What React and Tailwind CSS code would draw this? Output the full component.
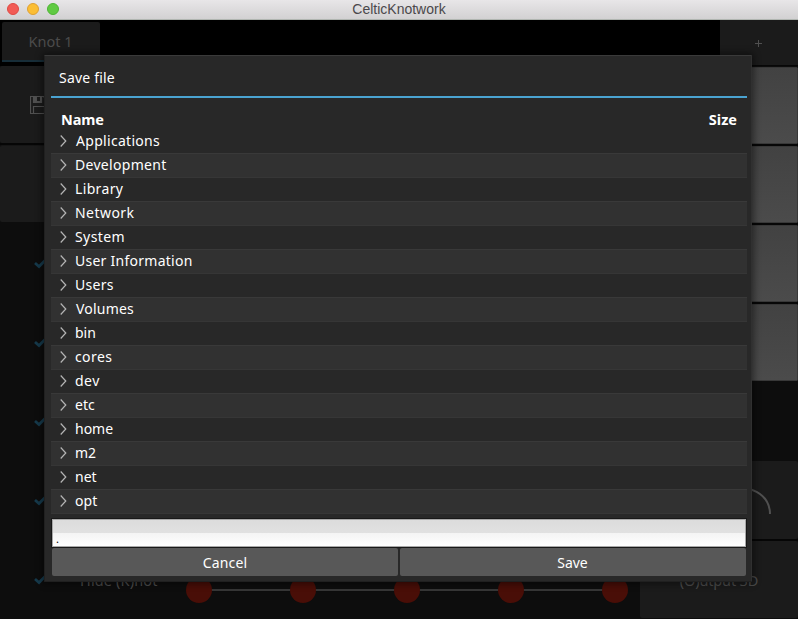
import React from "react";

const folders = [
  ["Applications", "tracking-[0.3px] ml-[1px]"], ["Development", "tracking-[0.3px]"], ["Library", "tracking-[0.35px]"],
  ["Network", "tracking-[0.45px]"], ["System", "tracking-[0.4px]"], ["User Information", "tracking-[0.26px]"],
  ["Users", "tracking-[0.3px]"], ["Volumes", "tracking-[0.2px] ml-[1px]"], ["bin", "tracking-normal"],
  ["cores", "tracking-[0.4px]"], ["dev", "tracking-[0.5px]"], ["etc", "tracking-normal"],
  ["home", "tracking-normal"], ["m2", "tracking-normal"], ["net", "tracking-normal"], ["opt", "tracking-[0.1px]"],
];

function Check() {
  return (
    <svg className="mt-[3px] ml-[34px] h-3 w-4" viewBox="0 0 16 12" fill="none" stroke="#163a4c" strokeWidth="2.8">
      <path d="M1 4 L5 7.5 L11 1.5" />
    </svg>
  );
}

function Tile() {
  return <div className="h-[77px] w-full shrink-0 rounded-[1px] border border-[#383838] bg-linear-to-b from-[#424242] to-[#4b4b4b]" />;
}

function TitleBar() {
  return (
    <div className="relative flex h-5 shrink-0 items-center border-b border-[#b0b5b0] bg-linear-to-b from-[#e8e6e8] to-[#d2d1d2] pl-[7px]">
      <div className="flex gap-2">
        <span className="-mt-[1px] size-3 rounded-full border border-[#df4a43] bg-[#f25b55]" />
        <span className="-mt-[1px] size-3 rounded-full border border-[#dfa032] bg-[#fbbe34]" />
        <span className="-mt-[1px] size-3 rounded-full border border-[#4eb534] bg-[#60ca42]" />
      </div>
      <span className="absolute inset-x-0 top-0 text-center font-['Liberation_Sans',sans-serif] text-[14px] leading-[19px] text-[#4b484b]">CelticKnotwork</span>
    </div>
  );
}

function Backdrop() {
  return (
    <div className="flex flex-1 flex-col">
      <div className="flex h-[46px] justify-between">
        <div className="mt-[2px] ml-[2px] flex h-10 w-[98px] items-center justify-center rounded-t-[2px] border-b-2 border-[#172d38] bg-[#1b1b1b] pt-[2px] pr-[1px] text-[14.5px] text-[#4b4b4b]">Knot 1</div>
        <div className="flex w-[78px] items-center justify-center border-b border-[#070707] bg-[#1b1b1b] pr-[1px] text-[#505050]">
          <svg className="mt-[2px] size-[7px]" viewBox="0 0 7 7" stroke="currentColor"><path d="M3.5 0V7M0 3.5H7" /></svg>
        </div>
      </div>
      <div className="flex h-[553px] bg-[#0d0d0d]">
        <div className="flex w-[80px] flex-col">
          <div className="flex h-[77px] items-center rounded-[2px] bg-[#1b1b1b]">
            <svg className="mt-[1px] ml-[30px] h-[18px] w-[18px]" viewBox="0 0 18 18" fill="none" stroke="#505050" strokeWidth="1.2">
              <path d="M.5 .5H13.5L17.5 4.5V17.5H.5ZM3.5 .5V6.5H11.5V.5M3.5 17.5V10.5H14.5V17.5" />
              <path d="M4 1H7V5H10V1H11V6H4Z" fill="#505050" stroke="none" />
            </svg>
          </div>
          <div className="h-[2px] bg-[#060606]" />
          <div className="h-[77px] rounded-[2px] border-t border-[#151515] bg-[#1b1b1b]" />
          <div className="mt-[2px] flex h-[395px] flex-col">
            <div className="flex flex-1 items-center"><Check /></div>
            <div className="flex flex-1 items-center"><Check /></div>
            <div className="flex flex-1 items-center"><Check /></div>
            <div className="flex flex-1 items-center"><Check /></div>
            <div className="flex flex-1 items-center"><Check /></div>
          </div>
        </div>
        <div className="flex w-[560px] flex-col justify-end">
          <div className="flex h-[78px] items-center">
            <span className="mt-[2px] w-[106px] text-[14.5px] tracking-[0.15px] text-[#4b4b4b]">Hide (K)not</span>
            <svg className="mt-[20px] h-[26px] w-[442px]" viewBox="0 0 442 26">
              <path d="M13 13H429" stroke="#363636" strokeWidth="2" />
              <g fill="#490e07"><circle cx="13" cy="13" r="13" /><circle cx="117" cy="13" r="13" /><circle cx="221" cy="13" r="13" /><circle cx="325" cy="13" r="13" /><circle cx="429" cy="13" r="13" /></g>
            </svg>
          </div>
        </div>
        <div className="flex w-[158px] flex-col">
          <div className="mt-[1px] flex flex-col gap-[2px] bg-[#070707]"><Tile /><Tile /><Tile /><Tile /></div>
          <div className="h-[80px] shrink-0" />
          <div className="flex h-[78px] shrink-0 items-center rounded-[2px] bg-[#1b1b1b]">
            <svg className="mt-[27px] ml-[80px] h-[52px] w-[52px]" viewBox="0 0 52 52" fill="none" stroke="#505050" strokeWidth="2"><path d="M18 2A25 25 0 0 1 50 26" /></svg>
          </div>
          <div className="h-[2px] shrink-0 bg-[#060606]" />
          <div className="flex h-[77px] shrink-0 items-center justify-center rounded-[2px] bg-[#1b1b1b] pt-[2px] text-[14.5px] tracking-[-0.15px] text-[#4b4b4b]">(O)utput 3D</div>
        </div>
      </div>
    </div>
  );
}

function FolderRow({ name, spacing, striped, first }) {
  return (
    <div className={striped ? "flex h-6 items-center border-t border-[#393939] bg-[#313131] pb-[1px]" : first ? "flex h-6 items-center" : "flex h-6 items-center border-t border-[#363636] pb-[1px]"}>
      <svg className="ml-[9px] h-3 w-[15px] shrink-0" viewBox="0 0 15 12" fill="none" stroke="#b5b5b5" strokeWidth="1.2"><path d="M.7 .5L5.8 6L.7 11.5" /></svg>
      <span className={"text-[14px] leading-[22px] " + spacing}>{name}</span>
    </div>
  );
}

function SaveDialog() {
  return (
    <div className="absolute top-[55px] left-[44px] flex h-[527px] w-[708px] flex-col rounded-[1px] border border-t-[#3a3a3a] border-r-[#303030] border-b-[#202020] border-l-[#202020] bg-[#282828] pr-[5px] pl-[6px] text-white shadow-[0_0_7px_2px_rgba(0,0,0,0.45)]">
      <div className="flex h-[42px] w-[696px] shrink-0 items-center border-b-2 border-[#4aa3d1] pt-[2px] pl-2 text-[14px] tracking-[0.2px]">Save file</div>
      <div className="flex h-[31px] w-[696px] shrink-0 items-end justify-between pr-[10px] pl-[10px] text-[14.5px] leading-[20px] font-bold"><span className="tracking-[-0.1px]">Name</span><span>Size</span></div>
      <div className="flex w-[696px] shrink-0 flex-col border-b border-[#363636]">
        {folders.map(([name, spacing], i) => <FolderRow key={name} name={name} spacing={spacing} striped={i % 2 === 1} first={i === 0} />)}
      </div>
      <div className="mt-[5px] ml-[1px] flex h-[28px] w-[694px] shrink-0 flex-col justify-between border border-[#a8a8a8] bg-linear-to-b from-[#dcdcdc] to-[#e6e6e6] text-[11px] text-black outline outline-[#181818]">
        <div className="h-[13px] w-full" />
        <div className="h-[13px] w-full bg-linear-to-b from-[#f4f4f4] to-[#fefefe] pl-[3px] leading-[11px]">.</div>
      </div>
      <div className="mt-[1px] ml-[1px] flex h-[28px] w-[694px] shrink-0 gap-[2px] text-[14px]">
        <button className="w-[346px] rounded-[2px] bg-[#585858] tracking-[0.15px]">Cancel</button>
        <button className="w-[346px] rounded-[2px] bg-[#585858] pr-[1px]">Save</button>
      </div>
    </div>
  );
}

export default function App() {
  return (
    <div className="relative flex h-[619px] w-[798px] flex-col overflow-hidden bg-black font-['Noto_Sans',sans-serif]">
      <TitleBar />
      <Backdrop />
      <SaveDialog />
    </div>
  );
}
